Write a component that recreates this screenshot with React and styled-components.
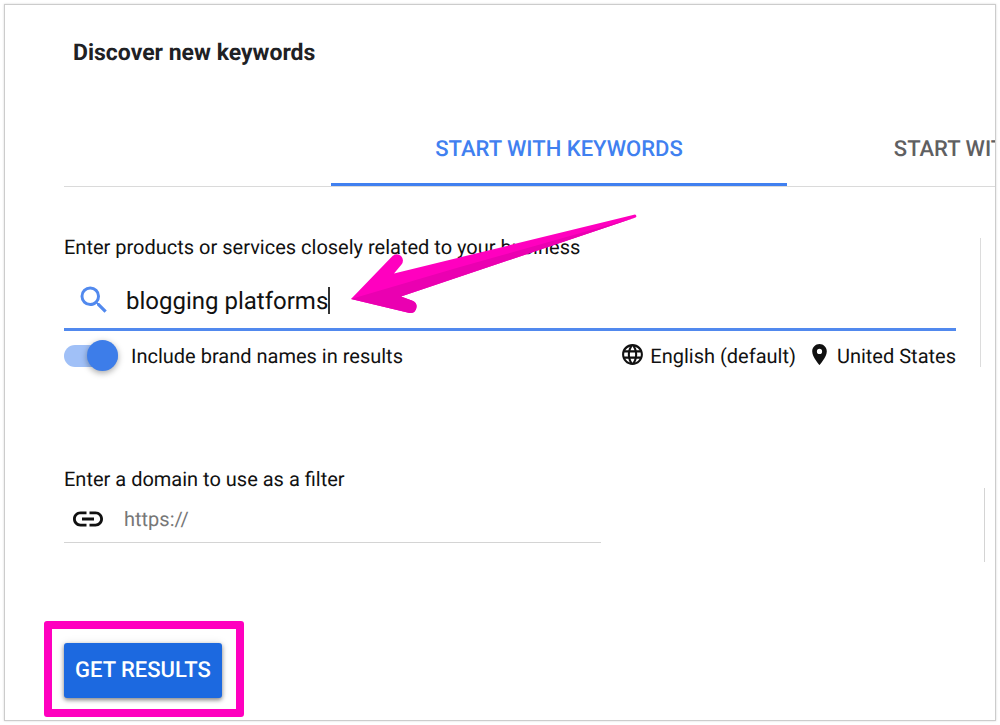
import React, { useState } from "react";
import styled, { createGlobalStyle } from "styled-components";
import { MdSearch, MdLanguage, MdLocationOn, MdLink } from "react-icons/md";

const GlobalStyle = createGlobalStyle`
  *, *::before, *::after { box-sizing: border-box; }
  body {
    margin: 0;
    background: #fff;
    color: #111;
    font-family: Roboto, "Liberation Sans", sans-serif;
    font-size: 20px;
    line-height: 20px;
    text-rendering: geometricPrecision;
  }
  button, input { font: inherit; color: inherit; text-rendering: inherit; }
`;

const Card = styled.main`
  margin: 4px;
  padding: 34px 0 22px 59px;
  border: 1px solid #ccc;
  box-shadow: 0 0 2px rgba(0, 0, 0, 0.16);
  overflow: hidden;
`;

const Title = styled.h1`
  margin: 0 0 45px 9px;
  font-size: 23px;
  line-height: 28px;
  font-weight: 700;
  color: #202124;
`;

const TabList = styled.div`
  display: flex;
  padding-left: 267px;
  border-bottom: 1px solid #dadada;
`;

const Tab = styled.button`
  flex: 0 0 456px;
  height: 74px;
  padding: 4px 0 0;
  border: 0;
  border-bottom: 3px solid ${(p) => (p.$active ? "#4080f0" : "transparent")};
  background: none;
  color: ${(p) => (p.$active ? "#4080f0" : "#5f6062")};
  font-size: 22px;
  font-weight: 500;
  white-space: nowrap;
  cursor: pointer;
`;

const KeywordSection = styled.section`
  position: relative;
  margin: 51px 14px 0 0;
  padding-right: 24px;
  border-right: 1px solid #dcdcdc;
`;

const FieldLabel = styled.label`
  display: block;
  font-size: 20px;
  line-height: 18px;
`;

const SearchField = styled.div`
  display: flex;
  align-items: center;
  height: 61px;
  margin-top: 14px;
  padding: 2px 0 0 12px;
  border-bottom: 3px solid #5189ee;
`;

const SearchInput = styled.input`
  field-sizing: content;
  min-width: 0;
  margin-left: 14px;
  padding: 2px 0 0;
  border: 0;
  outline: 0;
  background: none;
  font-size: 24px;
  line-height: 32px;
`;

const Caret = styled.span`
  width: 2px;
  height: 27px;
  background: #333;
`;

const Options = styled.div`
  display: flex;
  align-items: center;
  height: 22px;
  margin-top: 14px;
`;

const SwitchLabel = styled.label`
  display: flex;
  align-items: center;
  gap: 13px;
  margin-right: auto;
`;

const Switch = styled.input`
  appearance: none;
  position: relative;
  width: 54px;
  height: 22px;
  margin: 0;
  border-radius: 11px;
  background: ${(p) => (p.checked ? "#a0c0f7" : "#bbb")};
  cursor: pointer;

  &::before {
    content: "";
    position: absolute;
    top: -5px;
    left: ${(p) => (p.checked ? "23px" : "0")};
    width: 31px;
    height: 31px;
    border-radius: 50%;
    background: ${(p) => (p.checked ? "#3d7de9" : "#fafafa")};
    box-shadow: 0 2px 6px rgba(0, 0, 0, 0.35);
  }
`;

const Picker = styled.button`
  display: flex;
  align-items: center;
  gap: 5px;
  margin-left: 11px;
  padding: 0;
  border: 0;
  background: none;
  white-space: nowrap;
  cursor: pointer;

  svg { margin-bottom: 3px; }
`;

const DomainSection = styled.section`
  margin: 103px 10px 0 0;
`;

const DomainBody = styled.div`
  height: 74px;
  padding-top: 7px;
  border-right: 1px solid #d4d4d4;
`;

const DomainField = styled.div`
  display: flex;
  align-items: center;
  gap: 18px;
  width: 60%;
  max-width: 537px;
  height: 48px;
  padding-left: 6px;
  border-bottom: 1px solid #d4d4d4;
`;

const DomainInput = styled.input`
  flex: 1;
  min-width: 0;
  padding: 0;
  border: 0;
  outline: 0;
  background: none;

  &::placeholder { color: #777; opacity: 1; }
`;

const Highlight = styled.div`
  position: relative;
  width: fit-content;
  margin-top: 81px;

  &::after {
    content: "";
    position: absolute;
    inset: -22px -22px -19px -20px;
    border: 8px solid #ff00bf;
    border-radius: 3px;
    pointer-events: none;
  }
`;

const SubmitButton = styled.button`
  display: block;
  height: 55px;
  padding: 1px 11px 0;
  border: 0;
  border-radius: 3px;
  background: #1c69e0;
  box-shadow: 0 2px 4px rgba(0, 0, 0, 0.45), 0 0 8px rgba(0, 0, 0, 0.1);
  color: #fff;
  font-size: 22px;
  font-weight: 500;
  white-space: nowrap;
  cursor: pointer;
`;

const ArrowSvg = styled.svg`
  position: absolute;
  top: -33px;
  left: 281px;
  pointer-events: none;
`;

function Arrow() {
  return (
    <ArrowSvg width="300" height="120" viewBox="345 205 300 120" aria-hidden="true">
      <path
        fill="#ff00bf"
        d="M351 299 L392.500 256 A6.200 6.200 0 0 1 401.500 264.500 L394 273.500 L634 214.800 A1.500 1.500 0 0 1 635.500 217.600 L401 296.500 L412.500 300.700 A6.400 6.400 0 0 1 409.500 313 Z"
      />
      <path
        fill="#ea00b1"
        d="M351 299 L460 267 L635.500 217.600 L401 296.500 L412.500 300.700 A6.400 6.400 0 0 1 409.500 313 Z"
      />
    </ArrowSvg>
  );
}

export default function App() {
  const [keywords, setKeywords] = useState("blogging platforms");
  const [brands, setBrands] = useState(true);
  const [tab, setTab] = useState(0);

  return (
    <>
      <GlobalStyle />
      <Card>
        <Title>Discover new keywords</Title>
        <TabList role="tablist">
          {["START WITH KEYWORDS", "START WITH A WEBSITE"].map((name, i) => (
            <Tab key={name} role="tab" aria-selected={tab === i} $active={tab === i} onClick={() => setTab(i)}>
              {name}
            </Tab>
          ))}
        </TabList>
        <KeywordSection>
          <FieldLabel htmlFor="keywords">
            Enter products or services closely related to your business
          </FieldLabel>
          <SearchField>
            <MdSearch size={36} color="#5189ee" />
            <SearchInput id="keywords" value={keywords} onChange={(e) => setKeywords(e.target.value)} />
            <Caret />
          </SearchField>
          <Options>
            <SwitchLabel>
              <Switch type="checkbox" role="switch" checked={brands} onChange={(e) => setBrands(e.target.checked)} />
              Include brand names in results
            </SwitchLabel>
            <Picker>
              <MdLanguage size={25} />
              English (default)
            </Picker>
            <Picker>
              <MdLocationOn size={25} />
              United States
            </Picker>
          </Options>
          <Arrow />
        </KeywordSection>
        <DomainSection>
          <FieldLabel htmlFor="domain">Enter a domain to use as a filter</FieldLabel>
          <DomainBody>
            <DomainField>
              <MdLink size={36} />
              <DomainInput id="domain" type="url" placeholder="https://" />
            </DomainField>
          </DomainBody>
        </DomainSection>
        <Highlight>
          <SubmitButton>GET RESULTS</SubmitButton>
        </Highlight>
      </Card>
    </>
  );
}
